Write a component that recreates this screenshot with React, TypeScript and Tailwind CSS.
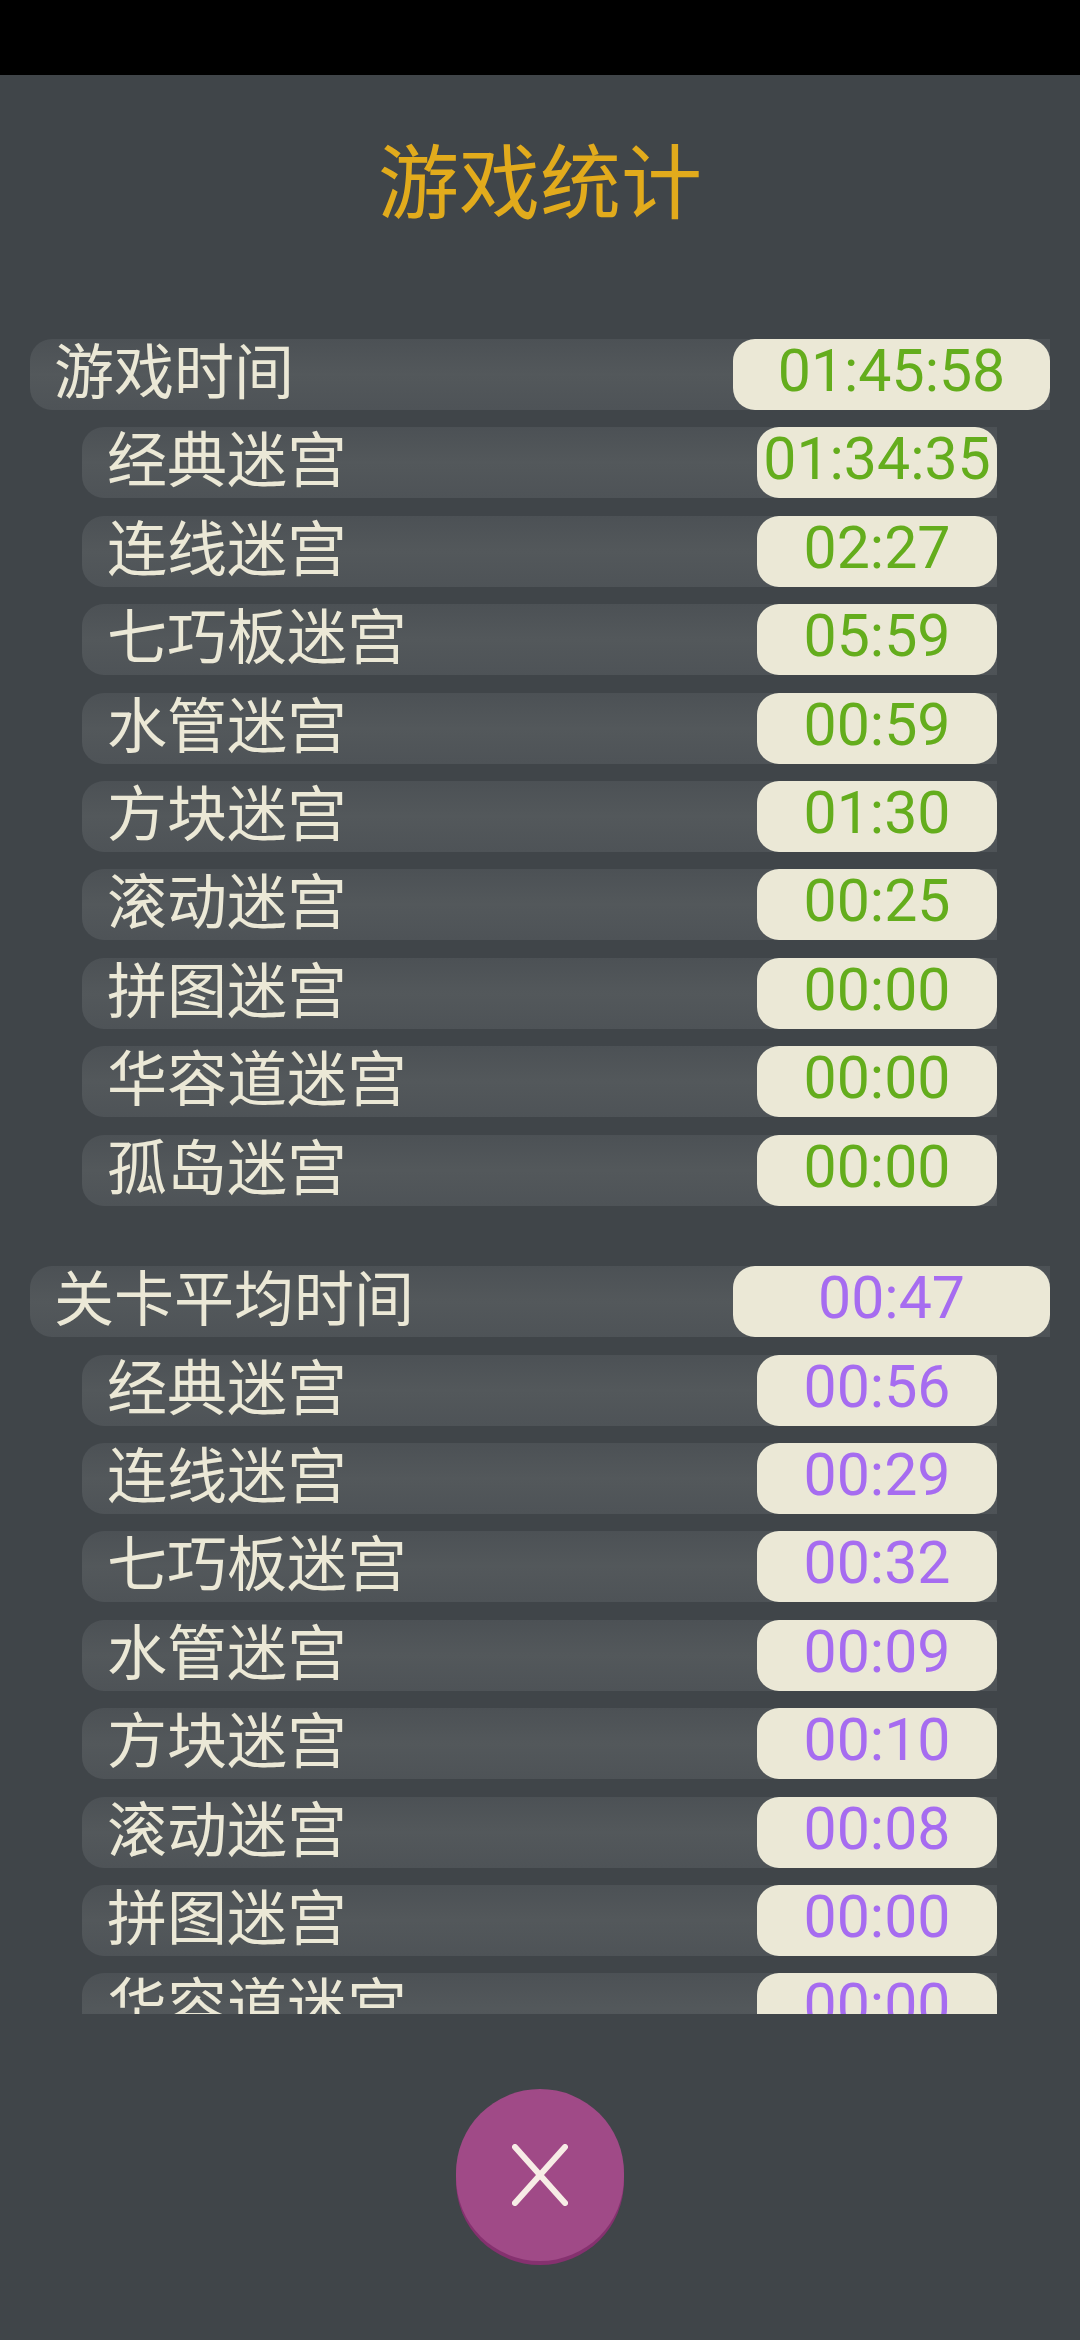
const playTimes = [
  ["经典迷宫", "01:34:35"],
  ["连线迷宫", "02:27"],
  ["七巧板迷宫", "05:59"],
  ["水管迷宫", "00:59"],
  ["方块迷宫", "01:30"],
  ["滚动迷宫", "00:25"],
  ["拼图迷宫", "00:00"],
  ["华容道迷宫", "00:00"],
  ["孤岛迷宫", "00:00"],
];

const avgTimes = [
  ["经典迷宫", "00:56"],
  ["连线迷宫", "00:29"],
  ["七巧板迷宫", "00:32"],
  ["水管迷宫", "00:09"],
  ["方块迷宫", "00:10"],
  ["滚动迷宫", "00:08"],
  ["拼图迷宫", "00:00"],
  ["华容道迷宫", "00:00"],
  ["孤岛迷宫", "00:00"],
];

function HeaderRow({ label, value, color }: { label: string; value: string; color: string }) {
  return (
    <div className="flex h-[71px] mx-[30px] rounded-l-[22px] bg-gradient-to-b from-[#4c5155] via-[#53585b] to-[#4e5357] shrink-0">
      <div className="flex-1 pl-[24px] text-[60px] leading-[57px] text-[#ebe8d6]">{label}</div>
      <div className={`w-[317px] rounded-[22px] bg-[#ebe8d6] text-center font-['Roboto'] text-[59px] leading-[64px] ${color}`}>
        {value}
      </div>
    </div>
  );
}

function SubRow({ label, value, color }: { label: string; value: string; color: string }) {
  return (
    <div className="flex h-[71px] ml-[82px] mr-[83px] rounded-l-[22px] bg-gradient-to-b from-[#4c5155] via-[#53585b] to-[#4e5357] shrink-0">
      <div className="flex-1 pl-[25px] text-[60px] leading-[57px] text-[#ebe8d6]">{label}</div>
      <div className={`w-[240px] rounded-[22px] bg-[#ebe8d6] text-center font-['Roboto'] text-[59px] leading-[64px] ${color}`}>
        {value}
      </div>
    </div>
  );
}

export default function App() {
  return (
    <div className="w-[1080px] h-[2340px] flex flex-col bg-[#404549] overflow-hidden font-['Noto_Sans_CJK_SC',sans-serif]">
      <div className="h-[75px] bg-black shrink-0" />

      <h1 className="mt-[62px] h-[80px] text-center text-[81px] leading-[80px] text-[#e2ab1c] shrink-0">游戏统计</h1>

      <div className="mt-[122px] h-[1675px] overflow-hidden flex flex-col gap-[17.4px] shrink-0">
        <HeaderRow label="游戏时间" value="01:45:58" color="text-[#64ad1d]" />
        {playTimes.map(([label, value], i) => (
          <SubRow key={i} label={label} value={value} color="text-[#64ad1d]" />
        ))}
        <div className="h-[26px] shrink-0" />
        <HeaderRow label="关卡平均时间" value="00:47" color="text-[#a66cf0]" />
        {avgTimes.map(([label, value], i) => (
          <SubRow key={i} label={label} value={value} color="text-[#a66cf0]" />
        ))}
      </div>

      <div className="flex justify-center mt-[75px]">
        <button className="w-[168px] h-[172px] rounded-full bg-[#a04a87] shadow-[0_4px_0_#85316f] flex items-center justify-center">
          <svg width="56" height="62" viewBox="0 0 56 62" fill="none" stroke="#f7ece6" strokeWidth="6" strokeLinecap="round">
            <path d="M3 3L53 59M53 3L3 59" />
          </svg>
        </button>
      </div>
    </div>
  );
}
